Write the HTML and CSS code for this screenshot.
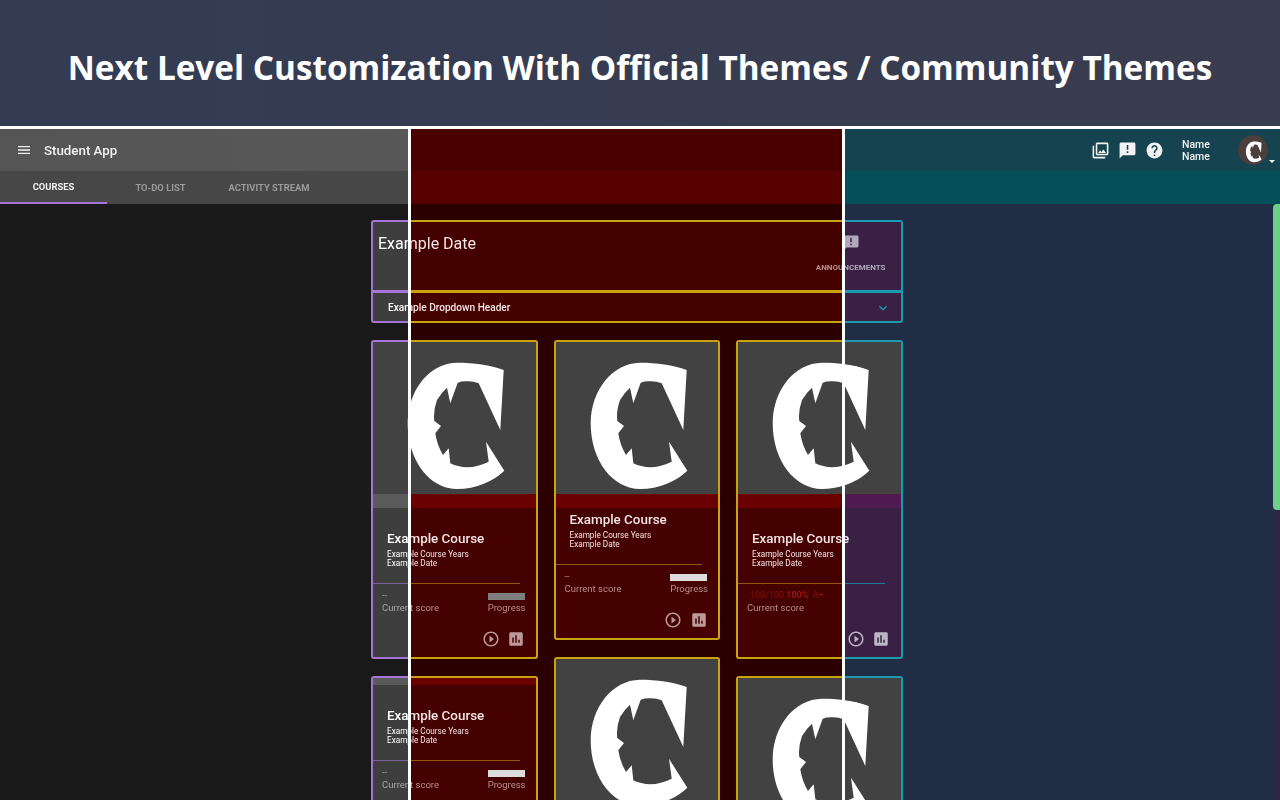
FILE: index.html
```html
<!DOCTYPE html>
<html lang="en">
<head>
  <meta charset="UTF-8">
  <title>Official Themes / Community Themes</title>
  <link rel="stylesheet" href="styles.css">
</head>
<body>

  <svg class="sprite" aria-hidden="true">
    <symbol id="i-menu" viewBox="0 0 24 24"><path d="M3 18h18v-2H3v2zm0-5h18v-2H3v2zm0-7v2h18V6H3z"/></symbol>
    <symbol id="i-library" viewBox="0 0 24 24"><path d="M20 4v12H8V4h12m0-2H8c-1.1 0-2 .9-2 2v12c0 1.1.9 2 2 2h12c1.1 0 2-.9 2-2V4c0-1.1-.9-2-2-2zm-8.5 9.67l1.69 2.26 2.48-3.1L19 15H9zM2 6v14c0 1.1.9 2 2 2h14v-2H4V6H2z"/></symbol>
    <symbol id="i-announce" viewBox="0 0 24 24"><path d="M20 2H4c-1.1 0-1.99.9-1.99 2L2 22l4-4h14c1.1 0 2-.9 2-2V4c0-1.1-.9-2-2-2zm-7 9h-2V5h2v6zm0 4h-2v-2h2v2z"/></symbol>
    <symbol id="i-help" viewBox="0 0 24 24"><path d="M12 2C6.48 2 2 6.48 2 12s4.48 10 10 10 10-4.48 10-10S17.52 2 12 2zm1 17h-2v-2h2v2zm2.07-7.75l-.9.92C13.45 12.9 13 13.5 13 15h-2v-.5c0-1.1.45-2.1 1.17-2.83l1.24-1.26c.37-.36.59-.86.59-1.41 0-1.1-.9-2-2-2s-2 .9-2 2H8c0-2.21 1.79-4 4-4s4 1.79 4 4c0 .88-.36 1.68-.93 2.25z"/></symbol>
    <symbol id="i-play" viewBox="0 0 24 24"><path d="M10 16.5l6-4.5-6-4.5v9zM12 2C6.48 2 2 6.48 2 12s4.48 10 10 10 10-4.48 10-10S17.52 2 12 2zm0 18c-4.41 0-8-3.59-8-8s3.59-8 8-8 8 3.59 8 8-3.59 8-8 8z"/></symbol>
    <symbol id="i-chart" viewBox="0 0 24 24"><path d="M19 3H5c-1.1 0-2 .9-2 2v14c0 1.1.9 2 2 2h14c1.1 0 2-.9 2-2V5c0-1.1-.9-2-2-2zM9 17H7v-7h2v7zm4 0h-2V7h2v10zm4 0h-2v-4h2v4z"/></symbol>
    <symbol id="i-chevron" viewBox="0 0 24 24"><path d="M16.59 8.59L12 13.17 7.41 8.59 6 10l6 6 6-6z"/></symbol>
    <symbol id="i-logo" viewBox="0 0 165 153"><path d="M131.7 29C118 24 102 21.7 85 21.7 57 22 35.7 50 35.7 82.3 35.7 120 58 148 85 148 104 148 122 140 132.3 129.7L114 100.7 116.7 120.7Q106 126 95 126.3 86 126 78.3 122.3L76.7 107.3 71 114Q65 104 63.3 92.3L69 85 62.3 80Q61 70 65 59 69 52 75 46.7L78.3 62.3 85.7 41.7Q90 40 95 40.3 101 40 106.7 42.3L128.3 89Z"/></symbol>
  </svg>

  <header class="banner">
    <h1>Next Level Customization With Official Themes / Community Themes</h1>
  </header>

  <div class="stage">
    <!-- script.js clones this for the other two themes -->
    <div class="app theme-dark" id="app">
      <div class="topbar">
        <svg class="menu-icon"><use href="#i-menu"/></svg>
        <span class="app-name">Student App</span>
        <div class="topbar-right">
          <svg class="top-icon"><use href="#i-library"/></svg>
          <svg class="top-icon"><use href="#i-announce"/></svg>
          <svg class="top-icon"><use href="#i-help"/></svg>
          <div class="user-name">Name<br>Name</div>
          <div class="avatar"><svg class="avatar-logo"><use href="#i-logo"/></svg></div>
          <span class="avatar-caret"></span>
        </div>
      </div>

      <nav class="tabs">
        <a class="tab active">COURSES</a>
        <a class="tab">TO-DO LIST</a>
        <a class="tab">ACTIVITY STREAM</a>
      </nav>

      <main class="main">
        <div class="content">
          <section class="date-card">
            <span class="date-title">Example Date</span>
            <div class="announce">
              <svg class="announce-icon"><use href="#i-announce"/></svg>
              <span>ANNOUNCEMENTS</span>
            </div>
          </section>
          <section class="dropdown">
            <span>Example Dropdown Header</span>
            <svg class="chevron"><use href="#i-chevron"/></svg>
          </section>

          <div class="columns">
            <div class="column">
              <article class="card">
                <div class="card-image"><svg class="logo"><use href="#i-logo"/></svg></div>
                <div class="card-strip"></div>
                <div class="card-info spaced">
                  <h3>Example Course</h3>
                  <p>Example Course Years<br>Example Date</p>
                </div>
                <hr class="card-line">
                <div class="stats">
                  <div><div class="score">--</div><div class="stat-label">Current score</div></div>
                  <div><div class="bar bar-dim"></div><div class="stat-label">Progress</div></div>
                </div>
                <div class="actions">
                  <svg class="action"><use href="#i-play"/></svg>
                  <svg class="action"><use href="#i-chart"/></svg>
                </div>
              </article>
              <article class="card">
                <div class="card-strip short"></div>
                <div class="card-info spaced">
                  <h3>Example Course</h3>
                  <p>Example Course Years<br>Example Date</p>
                </div>
                <hr class="card-line">
                <div class="stats">
                  <div><div class="score">--</div><div class="stat-label">Current score</div></div>
                  <div><div class="bar"></div><div class="stat-label">Progress</div></div>
                </div>
                <div class="actions">
                  <svg class="action"><use href="#i-play"/></svg>
                  <svg class="action"><use href="#i-chart"/></svg>
                </div>
              </article>
            </div>

            <div class="column">
              <article class="card">
                <div class="card-image"><svg class="logo"><use href="#i-logo"/></svg></div>
                <div class="card-strip"></div>
                <div class="card-info">
                  <h3>Example Course</h3>
                  <p>Example Course Years<br>Example Date</p>
                </div>
                <hr class="card-line">
                <div class="stats">
                  <div><div class="score">--</div><div class="stat-label">Current score</div></div>
                  <div><div class="bar"></div><div class="stat-label">Progress</div></div>
                </div>
                <div class="actions">
                  <svg class="action"><use href="#i-play"/></svg>
                  <svg class="action"><use href="#i-chart"/></svg>
                </div>
              </article>
              <article class="card">
                <div class="card-image"><svg class="logo"><use href="#i-logo"/></svg></div>
              </article>
            </div>

            <div class="column">
              <article class="card">
                <div class="card-image"><svg class="logo"><use href="#i-logo"/></svg></div>
                <div class="card-strip"></div>
                <div class="card-info spaced">
                  <h3>Example Course</h3>
                  <p>Example Course Years<br>Example Date</p>
                </div>
                <hr class="card-line">
                <div class="stats">
                  <div>
                    <div class="score score-red">100/100 <b>100%</b>&nbsp; A+</div>
                    <div class="stat-label">Current score</div>
                  </div>
                </div>
                <div class="actions">
                  <svg class="action"><use href="#i-play"/></svg>
                  <svg class="action"><use href="#i-chart"/></svg>
                </div>
              </article>
              <article class="card">
                <div class="card-image"><svg class="logo"><use href="#i-logo"/></svg></div>
              </article>
            </div>
          </div>
        </div>
        <div class="scrollbar"><div class="thumb"></div></div>
      </main>
    </div>
  </div>

  <script src="script.js"></script>
</body>
</html>
```

FILE: styles.css
```css
* {
  box-sizing: border-box;
}

html, body {
  height: 800px;
  margin: 0;
  overflow: hidden;
}

body {
  font-family: Roboto, sans-serif;
  background-color: #fff;
}

.sprite {
  display: none;
}

svg {
  fill: currentColor;
  display: block;
}

/* top banner */
.banner {
  height: 126px;
  display: flex;
  align-items: center;
  justify-content: center;
  padding-top: 8px;
  background: linear-gradient(90deg, #333c53, #3a3c4f);
}

.banner h1 {
  margin: 0;
  color: #fff;
  font-family: "Open Sans", sans-serif;
  font-size: 33.3px;
  font-weight: 700;
  white-space: nowrap;
}

/* the three themes sit in one grid cell, each clipped to its own slice */
.stage {
  display: grid;
  height: 671px;
  margin-top: 3px;
  overflow: hidden;
}

.app {
  grid-area: 1 / 1;
  width: 1280px;
  height: 671px;
  display: flex;
  flex-direction: column;
  background-color: var(--page);
  filter: blur(0.5px);
}

.theme-dark {
  --page: #191919;
  --bar: linear-gradient(90deg, #555, #5d5d5d);
  --tabs: #474747;
  --card: #3e3e3e;
  --strip: #5a5a5a;
  --accent: #a673d8;
  --line: #77639a;
  --text: #fff;
  --muted: #a5a5a5;
  --icon: #b0b0b0;
  --tab-dim: #9a9a9a;
  clip-path: inset(0 872px 0 0);
}

.theme-red {
  --page: #2b0000;
  --bar: #4a0000;
  --tabs: #560000;
  --card: #450000;
  --strip: #6a0000;
  --accent: #c9a30e;
  --line: #94570a;
  --text: #f5e4e4;
  --muted: #b88f8f;
  --icon: #bd9a9a;
  --tab-dim: #b88f8f;
  clip-path: inset(0 438px 0 411px);
}

.theme-blue {
  --page: #212d45;
  --bar: #15434f;
  --tabs: #03505a;
  --card: #3a2045;
  --strip: #521a52;
  --accent: #1a9bab;
  --line: #1f7a9a;
  --text: #f2eef5;
  --muted: #b3a7bd;
  --icon: #bdb6c6;
  --tab-dim: #a9c3c8;
  clip-path: inset(0 0 0 845px);
}

/* app header */
.topbar {
  height: 42px;
  flex-shrink: 0;
  display: flex;
  align-items: center;
  padding-left: 16px;
  color: #f2f2f2;
  background: var(--bar);
}

.menu-icon {
  width: 16px;
  height: 16px;
}

.app-name {
  margin-left: 12px;
  font-size: 13.3px;
  font-weight: 500;
}

.topbar-right {
  margin-left: auto;
  display: flex;
  align-items: center;
  padding-right: 12px;
  position: relative;
}

.top-icon {
  width: 19px;
  height: 19px;
  margin-right: 8px;
}

.user-name {
  margin: 2px 0 0 10px;
  width: 56px;
  font-size: 10.5px;
  font-weight: 500;
  line-height: 12px;
}

.avatar {
  width: 30px;
  height: 30px;
  border-radius: 50%;
  background-color: #4a3f3c;
  display: flex;
  align-items: center;
  justify-content: center;
}

.avatar-logo {
  width: 27px;
  height: 25px;
  color: #fff;
}

.avatar-caret {
  position: absolute;
  right: 5px;
  bottom: 2px;
  border-left: 3px solid transparent;
  border-right: 3px solid transparent;
  border-top: 3px solid #fff;
}

.tabs {
  height: 33px;
  flex-shrink: 0;
  display: flex;
  background-color: var(--tabs);
}

.tab {
  width: 107px;
  display: flex;
  align-items: center;
  justify-content: center;
  font-size: 9.4px;
  font-weight: 700;
  color: var(--tab-dim);
  white-space: nowrap;
}

.tab:last-child {
  width: 110px;
}

.tab.active {
  color: #f2f2f2;
  border-bottom: 2px solid var(--accent);
}

/* main area */
.main {
  flex: 1;
  min-height: 0;
  display: grid;
  grid-template-columns: 1fr 7px;
  overflow: hidden;
}

.content {
  width: 531.5px;
  margin-left: 371px;
  padding-top: 16px;
}

.date-card {
  height: 72px;
  display: flex;
  justify-content: space-between;
  padding: 12px 15px 0 5px;
  border: 2px solid var(--accent);
  border-radius: 3px 3px 0 0;
  background-color: var(--card);
}

.date-title {
  font-size: 16px;
  line-height: 20px;
  color: var(--text);
}

.announce {
  display: flex;
  flex-direction: column;
  align-items: center;
  font-size: 8px;
  font-weight: 700;
  color: var(--muted);
}

.announce-icon {
  width: 18px;
  height: 18px;
  margin-bottom: 11px;
  color: var(--muted);
}

.dropdown {
  height: 32px;
  margin-top: -1px;
  display: flex;
  align-items: center;
  justify-content: space-between;
  padding: 0 10px 0 15px;
  border: 2px solid var(--accent);
  border-radius: 0 0 3px 3px;
  background-color: var(--card);
  font-size: 10.1px;
  font-weight: 500;
  color: var(--text);
}

.chevron {
  width: 16px;
  height: 16px;
  margin-top: 2px;
  color: var(--accent);
}

.columns {
  display: grid;
  grid-template-columns: repeat(3, minmax(0, 1fr));
  column-gap: 16px;
  margin-top: 17px;
}

.column {
  display: flex;
  flex-direction: column;
  gap: 17px;
}

/* course card */
.card {
  border: 2px solid var(--accent);
  border-radius: 3px;
  background-color: var(--card);
  color: var(--text);
}

.card-image {
  height: 152px;
  overflow: hidden;
  background-color: #424242;
  color: #fff;
}

.logo {
  width: 165px;
  height: 153px;
  margin: -1px 0 0 -1px;
}

.card-strip {
  height: 14px;
  background-color: var(--strip);
}

.card-strip.short {
  height: 7px;
}

.card-info {
  padding: 3px 9px 0 14px;
}

.card-info.spaced {
  padding-top: 22px;
}

.card-info h3 {
  margin: 0;
  font-size: 13.4px;
  font-weight: 500;
  line-height: 18px;
}

.card-info p {
  margin: 2px 0 0;
  font-size: 8.2px;
  line-height: 9px;
}

.card-line {
  height: 1px;
  margin: 15px 16px 0 0;
  border: 0;
  background-color: var(--line);
}

.stats {
  display: flex;
  justify-content: space-between;
  padding: 6px 10px 0 9px;
}

.score {
  height: 10px;
  font-size: 9px;
  line-height: 10px;
  color: var(--muted);
}

.score-red {
  padding-left: 3px;
  color: #8a1212;
}

.score-red b {
  font-weight: 500;
  color: #a81414;
}

.bar {
  width: 37px;
  height: 7px;
  margin-top: 3px;
  background-color: #dcdcdc;
}

.bar-dim {
  background-color: #7e7e7e;
}

.stat-label {
  margin-top: 2px;
  font-size: 9.5px;
  line-height: 12px;
  color: var(--muted);
}

.actions {
  display: flex;
  justify-content: flex-end;
  gap: 7.5px;
  padding: 16px 10.5px 9px 0;
}

.action {
  width: 18px;
  height: 18px;
  color: var(--icon);
}

.scrollbar {
  background: linear-gradient(90deg, #212d45, #3a2045);
}

.thumb {
  height: 306px;
  border-radius: 4px 0 0 4px;
  background-color: #6fcf88;
}
```

FILE: script.js
```js
// same page, three themes
var app = document.getElementById('app');

['theme-red', 'theme-blue'].forEach(function(theme) {
  var copy = app.cloneNode(true);
  copy.removeAttribute('id');
  copy.className = 'app ' + theme;
  app.parentNode.appendChild(copy);
});
```
